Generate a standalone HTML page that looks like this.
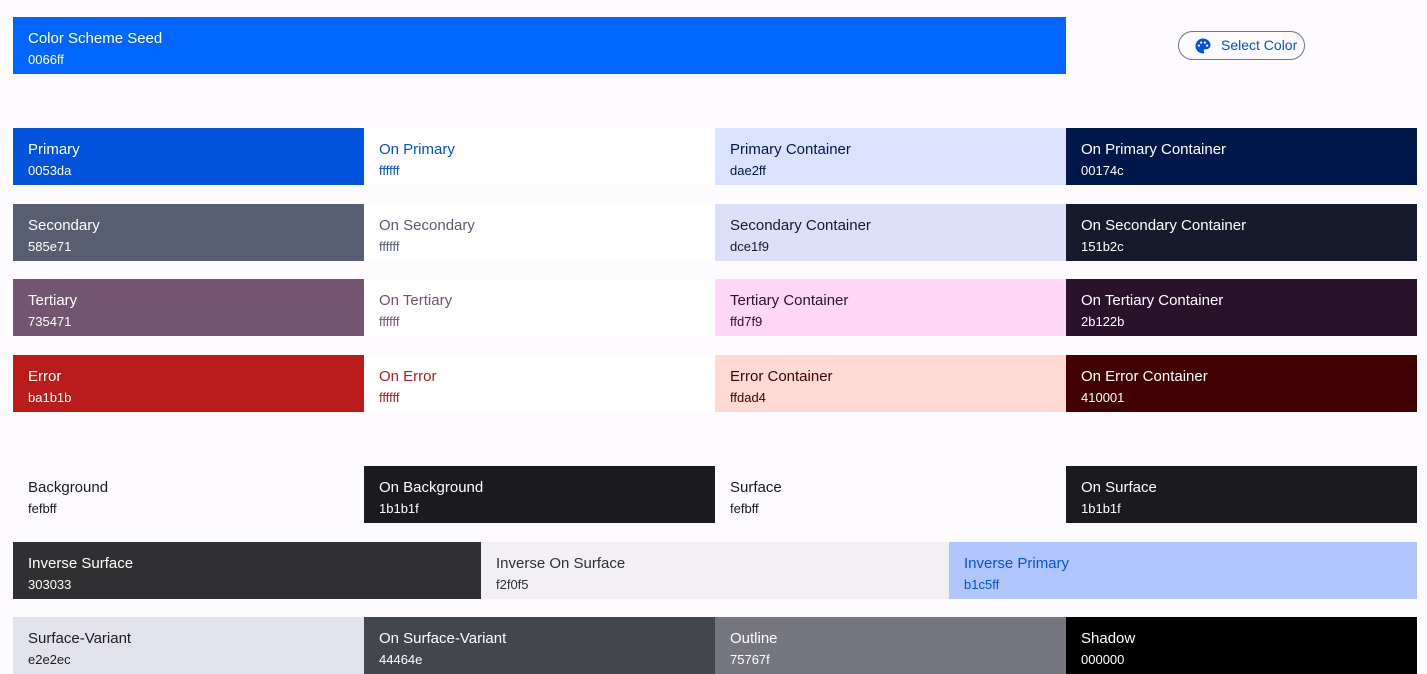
<!DOCTYPE html><html><head><meta charset="utf-8"><style>
body{margin:0;width:1427px;height:670px;background:#fefbff;position:relative;overflow:hidden;font-family:"Liberation Sans",sans-serif}
.c{position:absolute;height:57px;box-sizing:border-box}
.c b{position:absolute;left:15px;top:13px;font-weight:normal;font-size:15px;line-height:18px;white-space:nowrap}
.c i{position:absolute;left:15px;top:35px;font-style:normal;font-size:13px;line-height:16px}
.btn{position:absolute;left:1178px;top:31px;width:127px;height:29px;border:1px solid #767680;border-radius:15px;box-sizing:border-box;color:#0053da;font-size:14px;line-height:27px}
</style></head><body>
<div class="c" style="left:13px;top:17px;width:1053px;background:#0066ff;color:#fff"><b>Color Scheme Seed</b><i>0066ff</i></div>
<div class="btn"><svg style="position:absolute;left:15px;top:5px" width="18" height="18" viewBox="0 0 24 24"><path fill="#0053da" d="M12 2C6.5 2 2 6.5 2 12s4.5 10 10 10c.9 0 1.7-.8 1.7-1.7 0-.4-.2-.8-.4-1.1-.3-.3-.4-.7-.4-1.1 0-.9.8-1.7 1.7-1.7H16.5c3 0 5.5-2.5 5.5-5.5C22 6 17.5 2 12 2zM6.5 13a1.5 1.5 0 110-3 1.5 1.5 0 010 3zm3-4a1.5 1.5 0 110-3 1.5 1.5 0 010 3zm5 0a1.5 1.5 0 110-3 1.5 1.5 0 010 3zm3 4a1.5 1.5 0 110-3 1.5 1.5 0 010 3z"/></svg><span style="position:absolute;left:42px">Select Color</span></div>

<div class="c" style="left:13px;top:128px;width:351px;background:#0053da;color:#fff"><b>Primary</b><i>0053da</i></div>
<div class="c" style="left:364px;top:128px;width:351px;background:#fff;color:#0053da"><b>On Primary</b><i>ffffff</i></div>
<div class="c" style="left:715px;top:128px;width:351px;background:#dae2ff;color:#00174c"><b>Primary Container</b><i>dae2ff</i></div>
<div class="c" style="left:1066px;top:128px;width:351px;background:#00174c;color:#fff"><b>On Primary Container</b><i>00174c</i></div>

<div class="c" style="left:13px;top:204px;width:351px;background:#585e71;color:#fff"><b>Secondary</b><i>585e71</i></div>
<div class="c" style="left:364px;top:204px;width:351px;background:#fff;color:#585e71"><b>On Secondary</b><i>ffffff</i></div>
<div class="c" style="left:715px;top:204px;width:351px;background:#dce1f9;color:#151b2c"><b>Secondary Container</b><i>dce1f9</i></div>
<div class="c" style="left:1066px;top:204px;width:351px;background:#151b2c;color:#fff"><b>On Secondary Container</b><i>151b2c</i></div>

<div class="c" style="left:13px;top:279px;width:351px;background:#735471;color:#fff"><b>Tertiary</b><i>735471</i></div>
<div class="c" style="left:364px;top:279px;width:351px;background:#fff;color:#735471"><b>On Tertiary</b><i>ffffff</i></div>
<div class="c" style="left:715px;top:279px;width:351px;background:#ffd7f9;color:#2b122b"><b>Tertiary Container</b><i>ffd7f9</i></div>
<div class="c" style="left:1066px;top:279px;width:351px;background:#2b122b;color:#fff"><b>On Tertiary Container</b><i>2b122b</i></div>

<div class="c" style="left:13px;top:355px;width:351px;background:#ba1b1b;color:#fff"><b>Error</b><i>ba1b1b</i></div>
<div class="c" style="left:364px;top:355px;width:351px;background:#fff;color:#ba1b1b"><b>On Error</b><i>ffffff</i></div>
<div class="c" style="left:715px;top:355px;width:351px;background:#ffdad4;color:#410001"><b>Error Container</b><i>ffdad4</i></div>
<div class="c" style="left:1066px;top:355px;width:351px;background:#410001;color:#fff"><b>On Error Container</b><i>410001</i></div>

<div class="c" style="left:13px;top:466px;width:351px;background:#fefbff;color:#1b1b1f"><b>Background</b><i>fefbff</i></div>
<div class="c" style="left:364px;top:466px;width:351px;background:#1b1b1f;color:#fff"><b>On Background</b><i>1b1b1f</i></div>
<div class="c" style="left:715px;top:466px;width:351px;background:#fefbff;color:#1b1b1f"><b>Surface</b><i>fefbff</i></div>
<div class="c" style="left:1066px;top:466px;width:351px;background:#1b1b1f;color:#fff"><b>On Surface</b><i>1b1b1f</i></div>

<div class="c" style="left:13px;top:542px;width:468px;background:#303033;color:#fff"><b>Inverse Surface</b><i>303033</i></div>
<div class="c" style="left:481px;top:542px;width:468px;background:#f2f0f5;color:#303033"><b>Inverse On Surface</b><i>f2f0f5</i></div>
<div class="c" style="left:949px;top:542px;width:468px;background:#b1c5ff;color:#0053da"><b>Inverse Primary</b><i>b1c5ff</i></div>

<div class="c" style="left:13px;top:617px;width:351px;background:#e2e2ec;color:#1b1b1f"><b>Surface-Variant</b><i>e2e2ec</i></div>
<div class="c" style="left:364px;top:617px;width:351px;background:#44464e;color:#fff"><b>On Surface-Variant</b><i>44464e</i></div>
<div class="c" style="left:715px;top:617px;width:351px;background:#75767f;color:#fff"><b>Outline</b><i>75767f</i></div>
<div class="c" style="left:1066px;top:617px;width:351px;background:#000;color:#fff"><b>Shadow</b><i>000000</i></div>
</body></html>
